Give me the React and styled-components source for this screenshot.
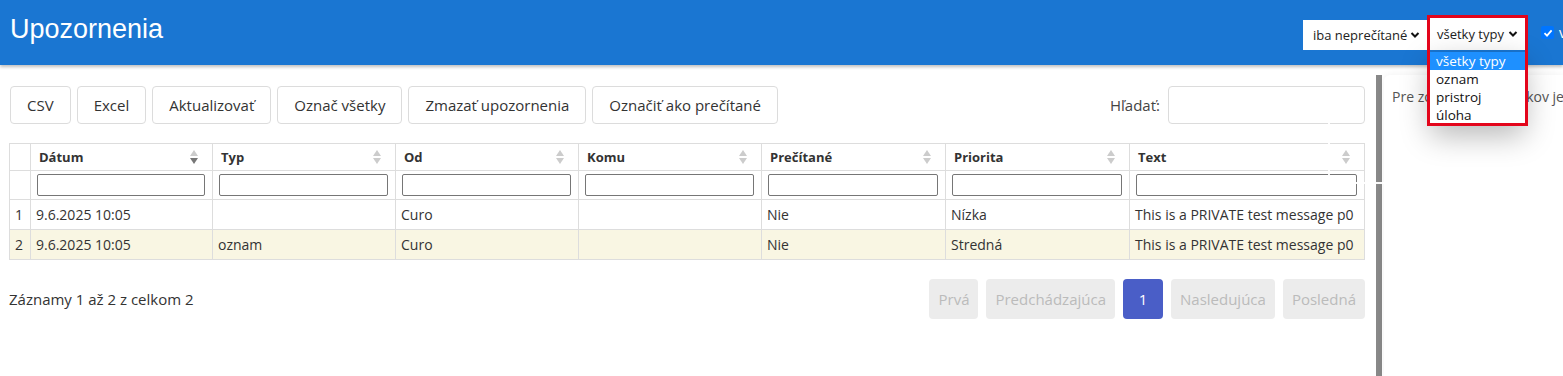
import React from "react";
import styled, { createGlobalStyle } from "styled-components";

const GlobalStyle = createGlobalStyle`
  body {
    margin: 0;
    font-family: "Open Sans", "Noto Sans", sans-serif;
    color: #333;
    background: #fff;
    overflow: hidden;
  }
`;

const Page = styled.div`
  width: 1563px;
  height: 376px;
  overflow: hidden;
  position: relative;
`;

const TopBar = styled.header`
  position: relative;
  z-index: 3;
  height: 65px;
  background-color: #1a76d2;
  display: flex;
  align-items: flex-start;
  padding-left: 10px;
  box-shadow: 0 2px 3px rgba(0, 0, 0, 0.25);
`;

const Title = styled.h1`
  margin: 14px 0 0 0;
  font-family: "Liberation Sans", Arial, sans-serif;
  font-size: 27px;
  font-weight: 400;
  color: #fff;
`;

const Controls = styled.div`
  margin-left: auto;
  margin-right: -36px;
  margin-top: 18px;
  display: flex;
  align-items: flex-start;
  flex-shrink: 0;

  & > * {
    flex-shrink: 0;
  }
`;

const SelectBox = styled.div`
  box-sizing: border-box;
  width: ${({ w }) => w}px;
  height: ${({ h }) => h}px;
  margin-top: ${({ top }) => top || 0}px;
  background: #fff;
  display: flex;
  align-items: center;
  justify-content: space-between;
  padding: 0 7px 0 ${({ pl }) => pl}px;
  font-size: 13px;
  color: #222;
  white-space: nowrap;
  flex-shrink: 0;
`;

const SelectWrap = styled.div`
  position: relative;
  margin: 0 3px;
`;

const Highlight = styled.div`
  position: absolute;
  top: -3px;
  left: -3px;
  right: -3px;
  height: 111px;
  box-sizing: border-box;
  border: 3px solid #e3051b;
  pointer-events: none;
  z-index: 2;
`;

const DropList = styled.ul`
  position: absolute;
  top: 34px;
  left: 0;
  right: 0;
  margin: 0;
  padding: 0 0 2px 0;
  list-style: none;
  background: #fff;
  border-radius: 0 0 4px 4px;
  box-shadow: 0 10px 30px rgba(0, 0, 0, 0.28);
  font-size: 13.5px;
  z-index: 1;
`;

const DropItem = styled.li`
  height: 18px;
  line-height: 18px;
  padding: 0 6px;
  color: ${({ selected }) => (selected ? "#fff" : "#111")};
  background: ${({ selected }) => (selected ? "#1e90ff" : "transparent")};
`;

const Check = styled.span`
  width: 13px;
  height: 13px;
  margin: 8px 0 0 13px;
  border-radius: 2px;
  background: #0075ff;
  display: flex;
  align-items: center;
  justify-content: center;
`;

const CheckLabel = styled.span`
  width: 40px;
  margin: 5px 0 0 5px;
  font-size: 14px;
  color: #fff;
  white-space: nowrap;
`;

const Body = styled.div`
  position: relative;
  display: flex;
  height: 311px;
`;

const Main = styled.main`
  box-sizing: border-box;
  width: 1376px;
  flex-shrink: 0;
  padding: 21px 11px 0 9px;
`;

const Divider = styled.div`
  width: 6px;
  margin-top: 10px;
  background: #888;
  flex-shrink: 0;
`;

const SidePanel = styled.aside`
  flex: 1;
  margin: 10px 0 0 2px;
  padding: 12px 8px;
  background: #fff;
  border-radius: 6px 0 0 0;
  box-shadow: 0 0 8px rgba(0, 0, 0, 0.06);
  font-size: 14px;
  color: #555;
  white-space: nowrap;
  overflow: hidden;
`;

// part of the hint that sits under the open dropdown
const Covered = styled.span`
  letter-spacing: 0.6px;
`;

const Ghost = styled.div`
  position: absolute;
  left: 1328px;
  top: 25px;
  width: 142px;
  height: 94px;
  box-sizing: border-box;
  border-right: 2px solid rgba(255, 255, 255, 0.95);
  border-bottom: 2px solid rgba(255, 255, 255, 0.95);
  border-left: 2px solid rgba(255, 255, 255, 0.95);
  pointer-events: none;
`;

const Toolbar = styled.div`
  display: flex;
  align-items: center;
  gap: 6px;
  padding-left: 1px;
`;

const Button = styled.button`
  height: 38px;
  padding: 0 16px;
  background: #fff;
  border: 1px solid #dcdcdc;
  border-radius: 4px;
  font-family: inherit;
  font-size: 15px;
  color: #333;
`;

const Search = styled.label`
  margin-left: auto;
  display: flex;
  align-items: center;
  gap: 8px;
  font-size: 15px;
  color: #444;
`;

const SearchInput = styled.input`
  box-sizing: border-box;
  width: 197px;
  height: 38px;
  border: 1px solid #dcdcdc;
  border-radius: 4px;
`;

const Table = styled.table`
  margin-top: 19px;
  width: 100%;
  table-layout: fixed;
  border-collapse: collapse;
  font-size: 14px;
`;

const Th = styled.th`
  height: 26px;
  padding: 0 14px 0 8px;
  border: 1px solid #ddd;
  text-align: left;
  font-size: 13px;
  font-weight: 700;
  color: #333;
`;

const HeadInner = styled.div`
  display: flex;
  align-items: center;
  justify-content: space-between;
`;

const Sort = styled.span`
  display: flex;
  flex-direction: column;
  gap: 2px;
`;

const Arrow = styled.span`
  width: 0;
  height: 0;
  border-left: 4px solid transparent;
  border-right: 4px solid transparent;
  ${({ down, on }) =>
    down
      ? `border-top: 6px solid ${on ? "#777" : "#ccc"};`
      : `border-bottom: 6px solid #ccc;`}
`;

const FilterCell = styled.td`
  height: 28px;
  padding: 0 7px 0 6px;
  border: 1px solid #ddd;
`;

const FilterInput = styled.input`
  box-sizing: border-box;
  display: block;
  width: 100%;
  height: 22px;
  border: 1px solid #767676;
  border-radius: 2px;
`;

const Row = styled.tr`
  background: ${({ alt }) => (alt ? "#f9f6e3" : "#fff")};
`;

const Td = styled.td`
  height: 29px;
  padding: 0 5px;
  border: 1px solid #ddd;
  color: #333;
  white-space: nowrap;
  overflow: hidden;
`;

const Footer = styled.div`
  margin-top: 19px;
  display: flex;
  align-items: center;
  justify-content: space-between;
`;

const Info = styled.div`
  font-size: 15px;
  color: #333;
`;

const Pager = styled.div`
  display: flex;
  gap: 8px;
`;

const PageBtn = styled.button`
  height: 40px;
  min-width: 40px;
  padding: 0 9px;
  border: none;
  border-radius: 4px;
  font-family: inherit;
  font-size: 15px;
  background: ${({ active }) => (active ? "#4a5ec7" : "#ececec")};
  color: ${({ active }) => (active ? "#fff" : "#bbb")};
`;

const Chevron = () => (
  <svg width="10" height="10" viewBox="0 0 10 10">
    <path d="M1.5 3 L5 6.5 L8.5 3" fill="none" stroke="#111" strokeWidth="2" />
  </svg>
);

const columns = [
  { title: "Dátum", width: 182, active: true },
  { title: "Typ", width: 183 },
  { title: "Od", width: 183 },
  { title: "Komu", width: 183 },
  { title: "Prečítané", width: 184 },
  { title: "Priorita", width: 184 },
  { title: "Text" },
];

const rows = [
  ["9.6.2025 10:05", "", "Curo", "", "Nie", "Nízka", "This is a PRIVATE test message p0"],
  ["9.6.2025 10:05", "oznam", "Curo", "", "Nie", "Stredná", "This is a PRIVATE test message p0"],
];

export default function App() {
  return (
    <Page>
      <GlobalStyle />
      <TopBar>
        <Title>Upozornenia</Title>
        <Controls>
          <SelectBox w={124} h={30} pl={10} top={2}>
            iba neprečítané <Chevron />
          </SelectBox>
          <SelectWrap>
            <SelectBox w={95} h={32} pl={7}>
              všetky typy <Chevron />
            </SelectBox>
            <DropList>
              <DropItem selected>všetky typy</DropItem>
              <DropItem>oznam</DropItem>
              <DropItem>pristroj</DropItem>
              <DropItem>úloha</DropItem>
            </DropList>
            <Highlight />
          </SelectWrap>
          <Check>
            <svg width="10" height="10" viewBox="0 0 10 10">
              <path d="M1.5 5.2 L4 7.6 L8.6 2.4" fill="none" stroke="#fff" strokeWidth="1.8" />
            </svg>
          </Check>
          <CheckLabel>všetky</CheckLabel>
        </Controls>
      </TopBar>
      <Body>
        <Main>
          <Toolbar>
            <Button>CSV</Button>
            <Button>Excel</Button>
            <Button>Aktualizovať</Button>
            <Button>Označ všetky</Button>
            <Button>Zmazať upozornenia</Button>
            <Button>Označiť ako prečítané</Button>
            <Search>
              Hľadať:
              <SearchInput />
            </Search>
          </Toolbar>
          <Table>
            <colgroup>
              <col style={{ width: 21 }} />
              {columns.map((c) => (
                <col key={c.title} style={c.width ? { width: c.width } : undefined} />
              ))}
            </colgroup>
            <thead>
              <tr>
                <Th />
                {columns.map((c) => (
                  <Th key={c.title}>
                    <HeadInner>
                      {c.title}
                      <Sort>
                        <Arrow />
                        <Arrow down on={c.active} />
                      </Sort>
                    </HeadInner>
                  </Th>
                ))}
              </tr>
              <tr>
                <FilterCell />
                {columns.map((c) => (
                  <FilterCell key={c.title}>
                    <FilterInput />
                  </FilterCell>
                ))}
              </tr>
            </thead>
            <tbody>
              {rows.map((r, i) => (
                <Row key={i} alt={i % 2 === 1}>
                  <Td>{i + 1}</Td>
                  {r.map((v, j) => (
                    <Td key={j}>{v}</Td>
                  ))}
                </Row>
              ))}
            </tbody>
          </Table>
          <Footer>
            <Info>Záznamy 1 až 2 z celkom 2</Info>
            <Pager>
              <PageBtn>Prvá</PageBtn>
              <PageBtn>Predchádzajúca</PageBtn>
              <PageBtn active>1</PageBtn>
              <PageBtn>Nasledujúca</PageBtn>
              <PageBtn>Posledná</PageBtn>
            </Pager>
          </Footer>
        </Main>
        <Divider />
        <SidePanel>
          Pre zo<Covered>brazenie riad</Covered>kov je potrebné vybrať záznam
        </SidePanel>
        <Ghost />
      </Body>
    </Page>
  );
}
